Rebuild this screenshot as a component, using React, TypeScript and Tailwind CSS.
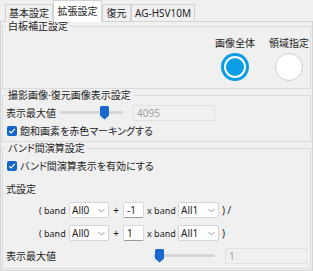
import React from "react";

const font = "font-['Noto_Sans','Noto_Sans_CJK_JP',sans-serif] [font-feature-settings:'palt']";

function Tab({ label, w, active }: { label: string; w: string; active?: boolean }) {
  return active ? (
    <div className={`relative z-10 -mb-px h-[22px] ${w} bg-white border border-b-0 border-[#d4d4d4] flex items-center justify-center pb-[1px]`}>
      {label}
    </div>
  ) : (
    <div className={`h-[17px] ${w} bg-[#f0f0f0] border border-b-0 border-[#d4d4d4] flex items-center justify-center`}>
      {label}
    </div>
  );
}

function Group({ title, h, children }: { title: string; h: string; children: React.ReactNode }) {
  return (
    <div className={`relative ${h} border border-[#dcdcdc] mx-[1px]`}>
      <div className="absolute -top-[7px] left-[3px] px-[2px] bg-[#f0f0f0] leading-[12px] text-[#1e1e1e]">{title}</div>
      {children}
    </div>
  );
}

function Check() {
  return (
    <div className="w-[10px] h-[10px] rounded-[2px] bg-[#1166c6] flex items-center justify-center shrink-0">
      <svg width="8" height="8" viewBox="0 0 8 8">
        <path d="M1.2 4.2 L3.2 6 L6.8 1.8" fill="none" stroke="white" strokeWidth="1.2" />
      </svg>
    </div>
  );
}

function Thumb() {
  return (
    <svg width="9" height="14" viewBox="0 0 9 14">
      <path d="M1.5 0 H7.5 a1.5 1.5 0 0 1 1.5 1.5 V9.5 L4.5 13.5 L0 9.5 V1.5 a1.5 1.5 0 0 1 1.5 -1.5Z" fill="#1769cf" />
    </svg>
  );
}

function Slider({ w, pos }: { w: string; pos: number }) {
  return (
    <div className={`relative ${w} h-[14px] shrink-0`}>
      <div className="absolute left-0 right-0 top-[5px] h-[3px] rounded-full bg-[#d6d6d6]" />
      <div className="absolute top-0" style={{ left: pos }}>
        <Thumb />
      </div>
    </div>
  );
}

function Select({ value, w }: { value: string; w: string }) {
  return (
    <div className={`${w} shrink-0 h-[16px] bg-white border border-[#d6d6d6] rounded-[2px] flex items-center pl-[2px] pr-[3px]`}>
      <span className="flex-1 leading-none">{value}</span>
      <svg width="7" height="5" viewBox="0 0 7 5">
        <path d="M0.5 1 L3.5 4 L6.5 1" fill="none" stroke="#8a8a8a" strokeWidth="0.9" />
      </svg>
    </div>
  );
}

function NumBox({ value }: { value: string }) {
  return (
    <div className="w-[21px] shrink-0 h-[16px] bg-white border border-[#dadada] border-b-[#9a9a9a] rounded-[2px] flex items-center pl-[3px] leading-none">
      {value}
    </div>
  );
}

function FormulaRow({ a, end }: { a: string; end: string }) {
  return (
    <div className="h-[16px] flex items-center pl-[33px]">
      <span className="w-[30px] shrink-0 leading-none text-[9px]">( band</span>
      <Select value="All0" w="w-[40px]" />
      <span className="w-[14px] shrink-0 text-center leading-none">+</span>
      <NumBox value={a} />
      <span className="ml-[3px] w-[31px] shrink-0 leading-none text-[9px]">x band</span>
      <Select value="All1" w="w-[41px]" />
      <span className="ml-[3px] leading-none">{end}</span>
    </div>
  );
}

export default function App() {
  return (
    <div className={`w-[313px] h-[271px] bg-[#f0f0f0] flex flex-col text-[10px] text-[#1e1e1e] whitespace-nowrap overflow-hidden ${font}`}>
      <div className="h-[21px] flex items-end pl-[5px] shrink-0">
        <Tab label="基本設定" w="w-[48px]" />
        <Tab label="拡張設定" w="w-[49px]" active />
        <Tab label="復元" w="w-[29px]" />
        <Tab label="AG-HSV10M" w="w-[64px]" />
      </div>
      <div className="flex-1 border border-[#d4d4d4] pt-[4px] flex flex-col gap-[6px]">
        <Group title="白板補正設定" h="h-[63px]">
          <div className="flex justify-end gap-[14px] pt-[10px] pr-[1px]">
            <div className="w-[40px] flex flex-col items-center gap-[4px]">
              <div className="h-[12px] leading-[12px]">画像全体</div>
              <div className="w-[28px] h-[28px] rounded-full bg-[#0a9de6] p-[3px]">
                <div className="w-full h-full rounded-full bg-white p-[2px]">
                  <div className="w-full h-full rounded-full bg-[#0a9de6]" />
                </div>
              </div>
            </div>
            <div className="w-[40px] flex flex-col items-center gap-[4px]">
              <div className="h-[12px] leading-[12px]">領域指定</div>
              <div className="w-[28px] h-[28px] rounded-full bg-white border border-[#cfcfcf]" />
            </div>
          </div>
        </Group>
        <Group title="撮影画像·復元画像表示設定" h="h-[47px]">
          <div className="flex flex-col gap-[3px] pt-[9px] pl-[3px]">
            <div className="h-[16px] flex items-center">
              <span className="w-[54px] shrink-0 leading-none">表示最大値</span>
              <Slider w="w-[63px]" pos={40} />
              <div className="ml-[10px] w-[82px] h-[16px] border border-[#e2e2e2] flex items-center pl-[3px] text-[#a0a0a0] leading-none">4095</div>
            </div>
            <div className="h-[14px] flex items-center gap-[3px] pl-[1px]">
              <Check />
              <span className="leading-none">飽和画素を赤色マーキングする</span>
            </div>
          </div>
        </Group>
        <Group title="バンド間演算設定" h="h-[121px]">
          <div className="flex flex-col pt-[10px] pl-[3px]">
            <div className="h-[14px] flex items-center gap-[3px] pl-[1px]">
              <Check />
              <span className="leading-none">バンド間演算表示を有効にする</span>
            </div>
            <div className="h-[14px] mt-[9px] flex items-center leading-none">式設定</div>
            <div className="mt-[6px] flex flex-col gap-[7px]">
              <FormulaRow a="-1" end=") /" />
              <FormulaRow a="1" end=")" />
            </div>
            <div className="mt-[7px] h-[16px] flex items-center">
              <span className="w-[147px] shrink-0 leading-none">表示最大値</span>
              <Slider w="w-[62px]" pos={2} />
              <div className="ml-[10px] w-[82px] h-[16px] border border-[#e2e2e2] flex items-center pl-[3px] text-[#a0a0a0] leading-none">1</div>
            </div>
          </div>
        </Group>
      </div>
    </div>
  );
}
